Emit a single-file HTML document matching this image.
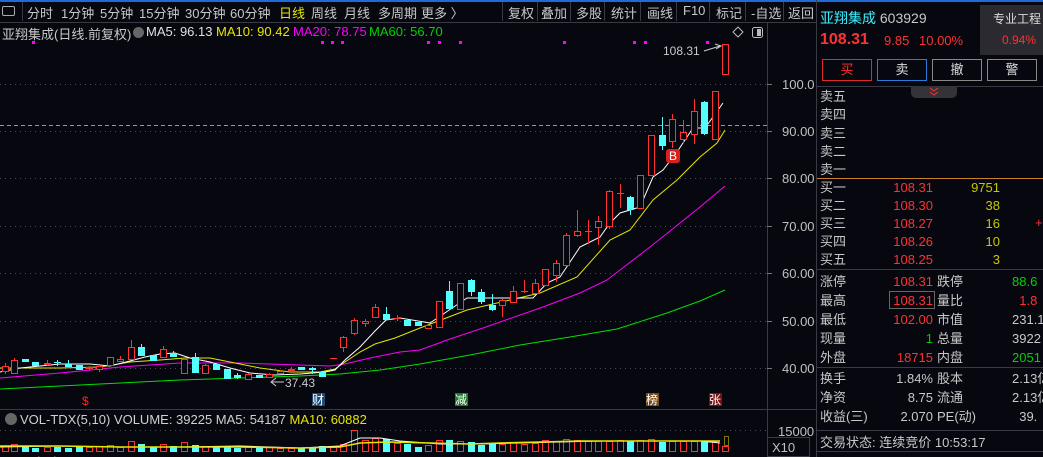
<!DOCTYPE html>
<html><head><meta charset="utf-8"><style>
*{margin:0;padding:0;box-sizing:border-box}
body{width:1043px;height:457px;background:#07070f;overflow:hidden;position:relative;font-family:"Liberation Sans","Noto Sans CJK SC",sans-serif;font-size:13px;color:#c8c8c8}
.a{position:absolute;white-space:nowrap}
.tb{top:3px;color:#c8c8c8}
.sep{position:absolute;top:2px;width:1px;height:19px;background:#3a3a44}
.r{color:#ff3232}.g{color:#00d200}.y{color:#e6e600}.cy{color:#3cf0ff}
.rt{text-align:right}
.hl{position:absolute;height:1px;background:#3a3a44}
</style></head><body>
<div class="a" style="left:0;top:0;width:1043px;height:2px;background:#1d6ad8"></div>
<div class="hl" style="left:0;top:22px;width:817px"></div>
<div class="a" style="left:2px;top:6px;width:13px;height:10px;border:1px solid #aaa;border-radius:2px"></div>
<div class="sep" style="left:22px"></div>
<div class="a tb" style="left:27px">分时</div>
<div class="a tb" style="left:61px">1分钟</div>
<div class="a tb" style="left:100px">5分钟</div>
<div class="a tb" style="left:139px">15分钟</div>
<div class="a tb" style="left:185px">30分钟</div>
<div class="a tb" style="left:230px">60分钟</div>
<div class="a tb y" style="left:279px">日线</div>
<div class="a tb" style="left:311px">周线</div>
<div class="a tb" style="left:344px">月线</div>
<div class="a tb" style="left:378px">多周期</div>
<div class="a tb" style="left:421px">更多 〉</div>
<div class="sep" style="left:502px"></div>
<div class="a tb" style="left:508px">复权</div><div class="sep" style="left:537px"></div>
<div class="a tb" style="left:541px">叠加</div><div class="sep" style="left:570px"></div>
<div class="a tb" style="left:576px">多股</div><div class="sep" style="left:604px"></div>
<div class="a tb" style="left:611px">统计</div><div class="sep" style="left:640px"></div>
<div class="a tb" style="left:647px">画线</div><div class="sep" style="left:676px"></div>
<div class="a tb" style="left:683px">F10</div><div class="sep" style="left:709px"></div>
<div class="a tb" style="left:716px">标记</div><div class="sep" style="left:745px"></div>
<div class="a tb" style="left:751px">-自选</div><div class="sep" style="left:783px"></div>
<div class="a tb" style="left:788px">返回</div>
<div class="a" style="left:2px;top:24px">亚翔集成(日线.前复权)</div>
<div class="a" style="left:133px;top:27px;width:11px;height:11px;border-radius:50%;background:#666"></div>
<div class="a" style="left:146px;top:24px;color:#e0e0e0">MA5: 96.13</div>
<div class="a y" style="left:216px;top:24px">MA10: 90.42</div>
<div class="a" style="left:293px;top:24px;color:#ff00ff">MA20: 78.75</div>
<div class="a g" style="left:369px;top:24px">MA60: 56.70</div>

<svg class="a" style="left:0;top:0" width="817" height="457" viewBox="0 0 817 457">
<g stroke="#4a4a55" stroke-dasharray="1,4" stroke-width="1">
<line x1="0" y1="84.5" x2="767" y2="84.5"/><line x1="0" y1="178.5" x2="767" y2="178.5"/><line x1="0" y1="226.5" x2="767" y2="226.5"/><line x1="0" y1="273.5" x2="767" y2="273.5"/><line x1="0" y1="321.5" x2="767" y2="321.5"/><line x1="0" y1="368.5" x2="767" y2="368.5"/><line x1="0" y1="430.5" x2="767" y2="430.5"/>
</g>
<line x1="0" y1="131.5" x2="767" y2="131.5" stroke="#4a4a55" stroke-dasharray="1,4"/>
<line x1="0" y1="125.5" x2="767" y2="125.5" stroke="#e08a1e" stroke-dasharray="4,3"/>
<line x1="767.5" y1="23" x2="767.5" y2="457" stroke="#3a3a44"/>
<line x1="0" y1="409.5" x2="817" y2="409.5" stroke="#3a3a44"/>
<line x1="816.5" y1="0" x2="816.5" y2="457" stroke="#3a3a44"/>
<g stroke="#777" stroke-width="1">
<line x1="767" y1="84.5" x2="772" y2="84.5"/><line x1="767" y1="131.5" x2="772" y2="131.5"/><line x1="767" y1="178.5" x2="772" y2="178.5"/><line x1="767" y1="226.5" x2="772" y2="226.5"/><line x1="767" y1="273.5" x2="772" y2="273.5"/><line x1="767" y1="321.5" x2="772" y2="321.5"/><line x1="767" y1="368.5" x2="772" y2="368.5"/>
</g>
<g fill="#c0c0c0" font-size="13" font-family="Liberation Sans">
<text x="782" y="89">100.0</text><text x="782" y="136">90.00</text><text x="782" y="183">80.00</text><text x="782" y="231">70.00</text><text x="782" y="278">60.00</text><text x="782" y="326">50.00</text><text x="782" y="373">40.00</text>
<text x="778" y="436">15000</text>
</g>
<rect x="767.5" y="437.5" width="42" height="19" fill="none" stroke="#3a3a44"/>
<text x="772" y="452" fill="#c0c0c0" font-size="13" font-family="Liberation Sans">X10</text>
<path d="M738 27 L743 32 L738 37 L733 32 Z" fill="none" stroke="#bbb"/>
<rect x="752.5" y="27.5" width="10" height="10" rx="2" fill="none" stroke="#bbb"/><rect x="757" y="29" width="4" height="7" fill="#bbb"/>
<g fill="#ff00ff"><rect x="32" y="41" width="3" height="3"/><rect x="321" y="41" width="3" height="3"/><rect x="331" y="41" width="3" height="3"/><rect x="341" y="41" width="3" height="3"/><rect x="427" y="41" width="3" height="3"/><rect x="438" y="41" width="3" height="3"/><rect x="459" y="41" width="3" height="3"/><rect x="563" y="41" width="3" height="3"/><rect x="633" y="41" width="3" height="3"/><rect x="644" y="41" width="3" height="3"/><rect x="706" y="41" width="3" height="3"/></g>
<polyline fill="none" stroke="#00e000" stroke-width="1" points="0,389 60,386 140,382 180,380 240,378 300,376 340,374 380,370 420,364 470,355 520,345 570,337 617,329 667,313 700,301 725,290"/>
<polyline fill="none" stroke="#ff00ff" stroke-width="1" points="0,378 60,373 120,367 180,363 240,363 300,365 330,366 345,364 370,358 400,352 420,350 450,339 483,328 543,307 580,293 607,280 650,247 700,207 725,186"/>
<polyline fill="none" stroke="#e6e600" stroke-width="1" points="0,368 60,368 100,367 130,362 160,360 185,358 210,358 230,362 260,368 290,372 320,372 335,369 345,362 360,352 375,344 395,338 420,328 467,310 510,300 540,293 577,277 610,240 630,230 653,200 677,180 700,157 717,143 725,130"/>
<polyline fill="none" stroke="#ffffff" stroke-width="1" points="0,372 20,368 40,366 60,364 90,364 110,366 130,361 145,357 160,354 175,353 190,358 210,362 230,368 250,373 275,375 300,374 325,372 335,370 345,360 360,347 375,331 386,320 400,318 430,323 467,298 500,298 533,298 547,283 560,277 580,247 600,237 610,223 620,213 640,207 653,177 663,170 677,152 693,128 705,128 723,103"/>
<g stroke-width="1" shape-rendering="crispEdges">
<g stroke="#ff3232" fill="#07070f">
<line x1="5.5" y1="363" x2="5.5" y2="374"/><rect x="2.5" y="366.5" width="6" height="5"/>
<line x1="14.5" y1="358" x2="14.5" y2="374"/><rect x="11.5" y="360.5" width="6" height="13"/>
<line x1="47.5" y1="360" x2="47.5" y2="366"/><rect x="44.5" y="363.5" width="6" height="1"/>
<line x1="89.5" y1="366" x2="89.5" y2="371"/><rect x="86.5" y="367.5" width="6" height="1"/>
<line x1="99.5" y1="365" x2="99.5" y2="372"/><rect x="96.5" y="366.5" width="6" height="3"/>
<rect x="107.5" y="357.5" width="6" height="8"/>
<line x1="120.5" y1="356" x2="120.5" y2="362"/><rect x="117.5" y="359.5" width="6" height="2"/>
<line x1="131.5" y1="340" x2="131.5" y2="360"/><rect x="128.5" y="347.5" width="6" height="12"/>
<line x1="163.5" y1="346" x2="163.5" y2="358"/><rect x="160.5" y="349.5" width="6" height="8"/>
<rect x="181.5" y="359.5" width="6" height="14"/>
<line x1="205.5" y1="364" x2="205.5" y2="374"/><rect x="202.5" y="365.5" width="6" height="8"/>
<line x1="248.5" y1="373" x2="248.5" y2="379"/><rect x="245.5" y="374.5" width="6" height="5"/>
<line x1="269.5" y1="373" x2="269.5" y2="378"/><rect x="266.5" y="374.5" width="6" height="3"/>
<line x1="280.5" y1="370" x2="280.5" y2="374"/><rect x="277.5" y="371.5" width="6" height="2"/>
<line x1="291.5" y1="367" x2="291.5" y2="371"/><rect x="288.5" y="369.5" width="6" height="1"/>
<line x1="330" y1="358.5" x2="337" y2="358.5"/>
<line x1="343.5" y1="336" x2="343.5" y2="352"/><rect x="340.5" y="337.5" width="6" height="10"/>
<line x1="354.5" y1="318" x2="354.5" y2="335"/><rect x="351.5" y="320.5" width="6" height="13"/>
<line x1="365.5" y1="319" x2="365.5" y2="327"/><rect x="362.5" y="321.5" width="6" height="2"/>
<line x1="375.5" y1="304" x2="375.5" y2="318"/><rect x="372.5" y="307.5" width="6" height="10"/>
<line x1="397.5" y1="315" x2="397.5" y2="321"/><line x1="394" y1="318.5" x2="401" y2="318.5"/>
<rect x="425.5" y="325.5" width="6" height="3"/>
<rect x="436.5" y="301.5" width="6" height="26"/>
<rect x="457.5" y="283.5" width="6" height="26"/>
<line x1="502.5" y1="299" x2="502.5" y2="317"/><rect x="499.5" y="300.5" width="6" height="5"/>
<line x1="513.5" y1="286" x2="513.5" y2="303"/><rect x="510.5" y="291.5" width="6" height="11"/>
<line x1="524.5" y1="280" x2="524.5" y2="293"/><line x1="521" y1="291.5" x2="528" y2="291.5"/>
<line x1="535.5" y1="279" x2="535.5" y2="294"/><rect x="532.5" y="283.5" width="6" height="10"/>
<rect x="542.5" y="269.5" width="6" height="16"/>
<line x1="556.5" y1="260" x2="556.5" y2="282"/><rect x="553.5" y="263.5" width="6" height="12"/>
<line x1="566.5" y1="233" x2="566.5" y2="266"/><rect x="563.5" y="235.5" width="6" height="30"/>
<line x1="577.5" y1="210" x2="577.5" y2="237"/><rect x="574.5" y="231.5" width="6" height="4"/>
<line x1="588.5" y1="220" x2="588.5" y2="243"/><line x1="585" y1="231.5" x2="592" y2="231.5"/>
<line x1="598.5" y1="216" x2="598.5" y2="245"/><rect x="595.5" y="221.5" width="6" height="6"/>
<line x1="609.5" y1="190" x2="609.5" y2="229"/><rect x="606.5" y="191.5" width="6" height="35"/>
<line x1="620.5" y1="184" x2="620.5" y2="208"/><line x1="617" y1="193.5" x2="624" y2="193.5"/>
<rect x="637.5" y="175.5" width="6" height="33"/>
<rect x="648.5" y="135.5" width="6" height="40"/>
<line x1="672.5" y1="114" x2="672.5" y2="148"/><rect x="669.5" y="119.5" width="6" height="22"/>
<line x1="683.5" y1="120" x2="683.5" y2="143"/><rect x="680.5" y="132.5" width="6" height="7"/>
<line x1="694.5" y1="99" x2="694.5" y2="144"/><rect x="691.5" y="111.5" width="6" height="23"/>
<rect x="712.5" y="91.5" width="6" height="48"/>
<rect x="722.5" y="44.5" width="6" height="30"/>
</g>
<g stroke="#54ffff" fill="#54ffff">
<rect x="22.5" y="359.5" width="6" height="2"/>
<rect x="32.5" y="362.5" width="6" height="3"/>
<line x1="57.5" y1="360" x2="57.5" y2="366"/><line x1="54" y1="362.5" x2="61" y2="362.5"/>
<line x1="68.5" y1="360" x2="68.5" y2="367"/><rect x="65.5" y="364.5" width="6" height="2"/>
<rect x="76.5" y="365.5" width="6" height="4"/>
<line x1="141.5" y1="344" x2="141.5" y2="356"/><rect x="138.5" y="347.5" width="6" height="8"/>
<rect x="150.5" y="355.5" width="6" height="5"/>
<line x1="173.5" y1="351" x2="173.5" y2="357"/><rect x="170.5" y="353.5" width="6" height="3"/>
<line x1="195.5" y1="353" x2="195.5" y2="373"/><rect x="192.5" y="357.5" width="6" height="15"/>
<rect x="213.5" y="364.5" width="6" height="5"/>
<rect x="224.5" y="369.5" width="6" height="9"/>
<line x1="237.5" y1="373" x2="237.5" y2="379"/><rect x="234.5" y="375.5" width="6" height="2"/>
<rect x="256.5" y="375.5" width="6" height="2"/>
<rect x="298.5" y="367.5" width="6" height="2"/>
<line x1="312.5" y1="367" x2="312.5" y2="374"/><rect x="309.5" y="368.5" width="6" height="1"/>
<rect x="319.5" y="372.5" width="6" height="4"/>
<line x1="386.5" y1="307" x2="386.5" y2="320"/><rect x="383.5" y="314.5" width="6" height="5"/>
<rect x="404.5" y="320.5" width="6" height="5"/>
<rect x="415.5" y="322.5" width="6" height="3"/>
<line x1="449.5" y1="281" x2="449.5" y2="310"/><rect x="446.5" y="291.5" width="6" height="17"/>
<line x1="471.5" y1="279" x2="471.5" y2="296"/><rect x="468.5" y="280.5" width="6" height="11"/>
<line x1="481.5" y1="289" x2="481.5" y2="304"/><rect x="478.5" y="292.5" width="6" height="9"/>
<line x1="492.5" y1="294" x2="492.5" y2="311"/><rect x="489.5" y="305.5" width="6" height="4"/>
<line x1="630.5" y1="196" x2="630.5" y2="215"/><rect x="627.5" y="197.5" width="6" height="12"/>
<line x1="662.5" y1="117" x2="662.5" y2="150"/><rect x="659.5" y="135.5" width="6" height="10"/>
<line x1="704.5" y1="101" x2="704.5" y2="135"/><rect x="701.5" y="102.5" width="6" height="31"/>
</g>
</g>
<rect x="666" y="149" width="14" height="14" rx="3" fill="#d8201c"/>
<text x="669" y="160" fill="#fff" font-size="12" font-family="Liberation Sans">B</text>
<text x="663" y="55" fill="#c8c8c8" font-size="12" font-family="Liberation Sans">108.31</text>
<path d="M704 51 L720 46 M715 44 L721 46 L716 49" stroke="#ccc" fill="none"/>
<path d="M284 382 L272 382 M276 378 L271 382 L276 386" stroke="#ccc" fill="none"/>
<text x="285" y="387" fill="#c8c8c8" font-size="12" font-family="Liberation Sans">37.43</text>
<text x="82" y="405" fill="#ff2020" font-size="12" font-family="Liberation Sans">$</text>
<rect x="312" y="393" width="13" height="13" fill="#1a4a7a"/><text x="312" y="404" fill="#fff" font-size="12" font-family="Noto Sans CJK SC">财</text>
<rect x="455" y="393" width="13" height="13" fill="#1e7a2a"/><text x="455" y="404" fill="#fff" font-size="12" font-family="Noto Sans CJK SC">减</text>
<rect x="646" y="393" width="13" height="13" fill="#7a4a14"/><text x="646" y="404" fill="#fff" font-size="12" font-family="Noto Sans CJK SC">榜</text>
<rect x="709" y="393" width="13" height="13" fill="#7a1010"/><text x="709" y="404" fill="#fff" font-size="12" font-family="Noto Sans CJK SC">张</text>
<circle cx="11" cy="419" r="6" fill="#666"/>
<text x="20" y="424" fill="#d0d0d0" font-size="13" font-family="Liberation Sans">VOL-TDX(5,10) VOLUME: 39225 MA5: 54187 <tspan fill="#e6e600">MA10: 60882</tspan></text>
<g shape-rendering="crispEdges">
<g fill="none" stroke="#ff3232">
<rect x="2.5" y="446.5" width="6" height="5"/><rect x="11.5" y="444.5" width="6" height="7"/><rect x="44.5" y="447.5" width="6" height="4"/><rect x="86.5" y="447.5" width="6" height="4"/><rect x="96.5" y="446.5" width="6" height="5"/><rect x="107.5" y="445.5" width="6" height="6"/><rect x="117.5" y="447.5" width="6" height="4"/><rect x="128.5" y="441.5" width="6" height="10"/><rect x="160.5" y="444.5" width="6" height="7"/><rect x="181.5" y="442.5" width="6" height="9"/><rect x="202.5" y="446.5" width="6" height="5"/><rect x="245.5" y="446.5" width="6" height="5"/><rect x="266.5" y="447.5" width="6" height="4"/><rect x="277.5" y="448.5" width="6" height="3"/><rect x="288.5" y="448.5" width="6" height="3"/><rect x="330.5" y="447.5" width="6" height="4"/><rect x="340.5" y="444.5" width="6" height="7"/><rect x="351.5" y="430.5" width="6" height="21"/><rect x="362.5" y="440.5" width="6" height="11"/><rect x="372.5" y="438.5" width="6" height="13"/><rect x="394.5" y="443.5" width="6" height="8"/><rect x="425.5" y="445.5" width="6" height="6"/><rect x="436.5" y="440.5" width="6" height="11"/><rect x="457.5" y="441.5" width="6" height="10"/><rect x="499.5" y="444.5" width="6" height="7"/><rect x="510.5" y="442.5" width="6" height="9"/><rect x="521.5" y="444.5" width="6" height="7"/><rect x="532.5" y="443.5" width="6" height="8"/><rect x="542.5" y="440.5" width="6" height="11"/><rect x="553.5" y="441.5" width="6" height="10"/><rect x="563.5" y="439.5" width="6" height="12"/><rect x="574.5" y="440.5" width="6" height="11"/><rect x="585.5" y="441.5" width="6" height="10"/><rect x="595.5" y="441.5" width="6" height="10"/><rect x="606.5" y="441.5" width="6" height="10"/><rect x="617.5" y="440.5" width="6" height="11"/><rect x="637.5" y="440.5" width="6" height="11"/><rect x="648.5" y="439.5" width="6" height="12"/><rect x="669.5" y="441.5" width="6" height="10"/><rect x="680.5" y="441.5" width="6" height="10"/><rect x="691.5" y="441.5" width="6" height="10"/><rect x="712.5" y="441.5" width="6" height="10"/><rect x="722.5" y="446.5" width="6" height="5"/>
</g>
<g fill="#54ffff">
<rect x="22" y="446" width="7" height="6"/><rect x="32" y="448" width="7" height="4"/><rect x="54" y="447" width="7" height="5"/><rect x="65" y="448" width="7" height="4"/><rect x="76" y="447" width="7" height="5"/><rect x="138" y="444" width="7" height="8"/><rect x="150" y="447" width="7" height="5"/><rect x="170" y="446" width="7" height="6"/><rect x="192" y="445" width="7" height="7"/><rect x="213" y="447" width="7" height="5"/><rect x="224" y="446" width="7" height="6"/><rect x="234" y="448" width="7" height="4"/><rect x="256" y="448" width="7" height="4"/><rect x="298" y="448" width="7" height="4"/><rect x="309" y="447" width="7" height="5"/><rect x="319" y="446" width="7" height="6"/><rect x="383" y="439" width="7" height="13"/><rect x="404" y="444" width="7" height="8"/><rect x="415" y="447" width="7" height="5"/><rect x="446" y="440" width="7" height="12"/><rect x="468" y="442" width="7" height="10"/><rect x="478" y="445" width="7" height="7"/><rect x="489" y="444" width="7" height="8"/><rect x="627" y="441" width="7" height="11"/><rect x="659" y="442" width="7" height="10"/><rect x="701" y="441" width="7" height="11"/></g>
</g>
<polyline fill="none" stroke="#fff" points="0,447 60,446 120,447 180,447 240,446 300,448 340,446 350,442 360,438 380,438 400,441 440,444 480,444 520,443 560,442 600,441 640,441 700,441 720,443"/>
<polyline fill="none" stroke="#e6e600" stroke-width="1.5" points="0,446 60,446 120,447 180,447 240,447 300,448 340,447 360,443 390,442 430,443 470,444 500,443 540,442 580,441 640,441 720,441"/>
<rect x="724.5" y="436.5" width="4" height="9" fill="none" stroke="#e6e600" stroke-dasharray="1,1"/>
<text x="2" y="466" fill="#aaa" font-size="13" font-family="Liberation Sans">BOLL(20) BOLL: 78.75 UB: 107.71 LB: 49.80</text>
</svg>

<div class="a cy" style="left:820px;top:8px;font-size:14px">亚翔集成 <span style="color:#c8c8c8">603929</span></div>
<div class="a" style="left:980px;top:5px;width:63px;height:50px;background:#2a2a30"></div>
<div class="a" style="left:993px;top:10px;font-size:12px;color:#ddd">专业工程</div>
<div class="a r" style="left:1002px;top:33px;font-size:12px">0.94%</div>
<div class="a r" style="left:820px;top:31px;font-size:16px;font-weight:bold">108.31</div>
<div class="a r" style="left:884px;top:33px">9.85</div>
<div class="a r" style="left:919px;top:33px">10.00%</div>
<div class="a" style="left:822px;top:59px;width:50px;height:22px;border:1px solid #e02828;color:#ff3232;text-align:center;line-height:20px">买</div>
<div class="a" style="left:877px;top:59px;width:50px;height:22px;border:1px solid #2a7ad8;color:#ddd;text-align:center;line-height:20px">卖</div>
<div class="a" style="left:932px;top:59px;width:50px;height:22px;border:1px solid #888;color:#ddd;text-align:center;line-height:20px">撤</div>
<div class="a" style="left:987px;top:59px;width:50px;height:22px;border:1px solid #888;color:#ddd;text-align:center;line-height:20px">警</div>
<div class="hl" style="left:817px;top:86px;width:226px"></div>
<div class="a" style="left:911px;top:86px;width:46px;height:12px;background:#333338;border-radius:0 0 5px 5px"></div>
<svg class="a" style="left:929px;top:87px" width="10" height="9"><path d="M1 1 L5 4 L9 1 M1 5 L5 8 L9 5" stroke="#ff3232" fill="none"/></svg>
<div class="a" style="left:820px;top:88px;line-height:18.3px">卖五<br>卖四<br>卖三<br>卖二<br>卖一</div>
<div class="a" style="left:817px;top:178px;width:226px;height:1px;background:#c8802a"></div>
<div class="a" style="left:820px;top:179px;line-height:18px">买一<br>买二<br>买三<br>买四<br>买五</div>
<div class="a r rt" style="left:870px;top:179px;width:63px;line-height:18px">108.31<br>108.30<br>108.27<br>108.26<br>108.25</div>
<div class="a rt" style="left:950px;top:179px;width:50px;line-height:18px;color:#c8c800">9751<br>38<br>16<br>10<br>3</div>
<div class="a r" style="left:1035px;top:215px">+</div>
<div class="hl" style="left:817px;top:269px;width:226px"></div>
<div class="a" style="left:820px;top:272px;line-height:19px">涨停<br>最高<br>最低<br>现量<br>外盘</div>
<div class="a rt" style="left:870px;top:272px;width:63px;line-height:19px"><span class="r">108.31</span><br><span class="r">108.31</span><br><span class="r">102.00</span><br><span class="g">1</span><br><span class="r">18715</span></div>
<div class="a" style="left:889px;top:291px;width:46px;height:18px;border:1px solid #666"></div>
<div class="a" style="left:937px;top:272px;line-height:19px">跌停<br>量比<br>市值<br>总量<br>内盘</div>
<div class="a" style="left:1012px;top:272px;line-height:19px"><span class="g">88.6</span><br><span class="r">&nbsp;&nbsp;1.8</span><br>231.1亿<br>3922<br><span class="g">2051</span></div>
<div class="hl" style="left:817px;top:367px;width:226px"></div>
<div class="a" style="left:820px;top:369px;line-height:19px">换手<br>净资<br>收益(三)</div>
<div class="a rt" style="left:870px;top:369px;width:63px;line-height:19px">1.84%<br>8.75<br>2.070</div>
<div class="a" style="left:937px;top:369px;line-height:19px">股本<br>流通<br>PE(动)</div>
<div class="a" style="left:1012px;top:369px;line-height:19px">2.13亿<br>2.13亿<br>&nbsp;&nbsp;39.</div>
<div class="hl" style="left:817px;top:430px;width:226px"></div>
<div class="a" style="left:820px;top:432px">交易状态: 连续竞价 10:53:17</div>
<div class="hl" style="left:817px;top:451px;width:226px"></div>
</body></html>
